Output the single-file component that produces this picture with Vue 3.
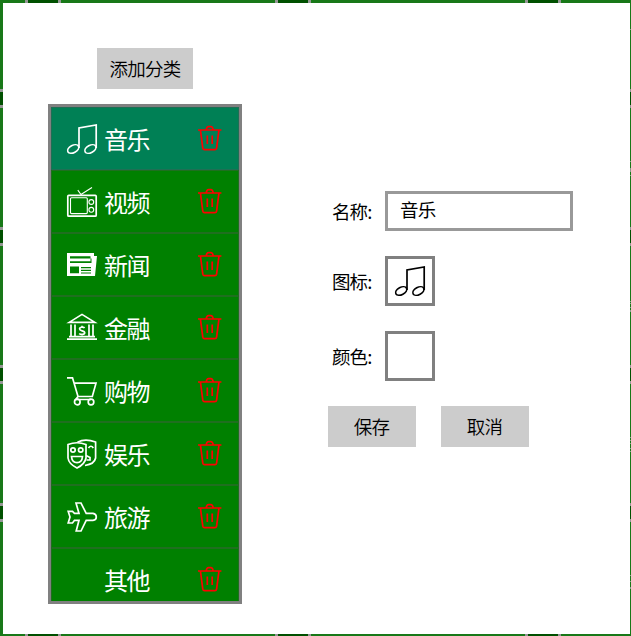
<script setup>
import { ref } from 'vue'

const categories = ref([
  { name: '音乐', icon: 'music' },
  { name: '视频', icon: 'tv' },
  { name: '新闻', icon: 'news' },
  { name: '金融', icon: 'bank' },
  { name: '购物', icon: 'cart' },
  { name: '娱乐', icon: 'masks' },
  { name: '旅游', icon: 'plane' },
  { name: '其他', icon: '' },
])
const selected = ref(0)
const name = ref('音乐')
</script>

<template>
  <div class="backdrop">
    <main class="dialog">
      <section class="side">
        <button class="btn add">添加分类</button>
        <ul class="list">
          <li
            v-for="(c, i) in categories"
            :key="c.name"
            class="item"
            :class="{ active: i === selected }"
            @click="selected = i"
          >
            <svg class="icon" viewBox="0 0 30 30">
              <g v-if="c.icon === 'music'" class="line">
                <path d="M12 24V4L29.2 .9V24" />
                <ellipse cx="6.2" cy="25" rx="6" ry="3.6" transform="rotate(-28 6.2 25)" />
                <ellipse cx="23.4" cy="25" rx="6" ry="3.6" transform="rotate(-28 23.4 25)" />
              </g>
              <g v-else-if="c.icon === 'tv'" class="line">
                <rect x=".8" y="8.3" width="28.4" height="20.9" rx="1" />
                <rect class="thin" x="3.5" y="10.8" width="16.8" height="15.8" rx="1" />
                <circle class="thin" cx="24.3" cy="15" r="2.4" />
                <circle class="thin" cx="24.3" cy="22.8" r="2.4" />
                <path class="thin" d="M10.8 3.2L14 7.5L25 .5" />
              </g>
              <g v-else-if="c.icon === 'news'">
                <path class="solid" d="M0 3H27V6H30L28 26H0Z" />
                <path class="hole" d="M3 6.2H23.5V8.5H3ZM3 11.2H21V13H3ZM3 16.5H12V23.2H3ZM14 17H24V18.3H14ZM14 19.8H24V21H14ZM14 22.4H24V23.5H14ZM23.5 8.5H24.5V13H21V11.2H23.5Z" />
              </g>
              <g v-else-if="c.icon === 'bank'" class="line">
                <path d="M2.2 9.4L15 1.4L27.8 9.4ZM0 26.2H30M2 23.6H28" />
                <path d="M4 11.5V23.8M8 11.5V23.8M22 11.5V23.8M26 11.5V23.8" />
                <path d="M17.6 15C16.5 13.8 12.6 13.8 12.6 16C12.6 18.4 17.7 17.3 17.7 19.8C17.7 22 13.4 21.8 12.2 20.5M15 12.8V14.3M15 21V22.6" />
              </g>
              <g v-else-if="c.icon === 'cart'" class="line">
                <path d="M0 1.8H5.5L11 20.5H25.3L29 7.2H7.2M11 20.5L8.8 23.5H24" />
                <circle cx="10.3" cy="26" r="2.8" />
                <circle cx="24" cy="26" r="2.8" />
              </g>
              <g v-else-if="c.icon === 'masks'" class="line">
                <path d="M1 5.5Q10 2 19 5.5V19Q18 25 10 29Q1.8 25 1 19Z" />
                <path d="M10.5 3.2Q18 -.8 28.6 3V19Q27.5 25 18 26.5M21.5 9Q24 5.5 26.3 9M19 16.5L23 18.5V21H19.5" />
                <circle cx="6" cy="11" r="2.2" />
                <circle cx="13.7" cy="11" r="2.2" />
                <path d="M4.5 17.5H15.5Q15 23.6 10 23.6Q5 23.6 4.5 17.5Z" />
              </g>
              <path
                v-else-if="c.icon === 'plane'"
                class="line"
                d="M9 1H14L19.2 11.4H26Q29.3 12 29.3 15Q29.3 18 26 18.3H19.2L14 29H9.2L12 18.3H7.5L5.5 21H1.2L3 15L1.2 9.4H5.5L7.5 11.4H12Z"
              />
            </svg>
            <span class="name">{{ c.name }}</span>
            <svg class="trash" viewBox="0 0 24 26">
              <path d="M0 5H23.4M8.3 4.5Q8.8 1.7 10.5 1.7H12.9Q14.6 1.7 15.1 4.5M2.5 5.5L4.8 23.2Q5.1 24.7 6.6 24.7H16.8Q18.3 24.7 18.6 23.2L20.9 5.5M9.3 10.5V19M14.2 10.5V19" />
            </svg>
          </li>
        </ul>
      </section>

      <form class="form" @submit.prevent>
        <div class="field">
          <label class="label">名称:</label>
          <input v-model="name" class="input" type="text" />
        </div>
        <div class="field">
          <label class="label">图标:</label>
          <div class="box">
            <svg class="icon" viewBox="0 0 30 30">
              <g class="line">
                <path d="M12 24V4L29.2 .9V24" />
                <ellipse cx="6.2" cy="25" rx="6" ry="3.6" transform="rotate(-28 6.2 25)" />
                <ellipse cx="23.4" cy="25" rx="6" ry="3.6" transform="rotate(-28 23.4 25)" />
              </g>
            </svg>
          </div>
        </div>
        <div class="field">
          <label class="label">颜色:</label>
          <div class="box"></div>
        </div>
        <div class="actions">
          <button class="btn">保存</button>
          <button class="btn">取消</button>
        </div>
      </form>
    </main>
  </div>
</template>

<style>
body {
  margin: 0;
  overflow: hidden;
}
</style>

<style scoped>
.backdrop {
  --columns: repeating-linear-gradient(to right, #187818 0 25px, #969696 25px 28px, #005000 28px 58px, #969696 58px 61px, #187818 61px 250px);
  --rows: repeating-linear-gradient(to bottom, #187818 0 89px, #969696 89px 92px, #005000 92px 105px, #969696 105px 108px, #187818 108px 138px);
  --marks: linear-gradient(to bottom, transparent 29px, #8a9a8a 29px 30px, transparent 30px 161px, #8a9a8a 161px 162px, transparent 162px 168px, #8a9a8a 168px 172px, transparent 172px 175px, #8a9a8a 175px 176px, transparent 176px 301px, #8a9a8a 301px 302px, transparent 302px 303px, #8a9a8a 303px 304px, transparent 304px 307px, #8a9a8a 307px 308px, transparent 308px 310px, #8a9a8a 310px 312px, transparent 312px 437px, #8a9a8a 437px 438px, transparent 438px 440px, #8a9a8a 440px 441px, transparent 441px 443px, #8a9a8a 443px 444px, transparent 444px 448px, #8a9a8a 448px 449px, transparent 449px 451px, #8a9a8a 451px 452px, transparent 452px 575px, #8a9a8a 575px 576px, transparent 576px 581px, #8a9a8a 581px 582px, transparent 582px 587px, #8a9a8a 587px 589px, transparent 589px);
  box-sizing: border-box;
  width: 631px;
  height: 636px;
  padding: 3px 1px 2px 3px;
  font-family: 'Noto Sans CJK SC', sans-serif;
  background:
    var(--columns) 0 0 / 100% 3px no-repeat,
    var(--columns) 0 100% / 100% 2px no-repeat,
    var(--marks) 100% 0 / 1px 100% no-repeat,
    var(--rows) 0 -138px / 100% 1000px no-repeat,
    #187818;
}
.dialog {
  box-sizing: border-box;
  display: flex;
  height: 100%;
  padding-left: 45px;
  background: #fff;
}
.side {
  display: flex;
  flex-direction: column;
  align-items: center;
  gap: 15px;
  width: 194px;
  padding-top: 45px;
}
.btn {
  width: 88px;
  height: 41px;
  padding: 0 1px 1px 0;
  border: 0;
  background: #ccc;
  color: #000;
  font: 350 18.5px 'Noto Sans CJK SC', sans-serif;
  letter-spacing: -0.8px;
}
.add {
  width: 96px;
  padding-right: 0;
}
.list {
  box-sizing: border-box;
  width: 194px;
  height: 500px;
  margin: 0;
  padding: 0;
  overflow: hidden;
  border: 3px solid #808080;
  background: #008000;
  list-style: none;
}
.item {
  box-sizing: border-box;
  display: flex;
  align-items: center;
  height: 63px;
  padding: 0 16px 0 15px;
  border: 1px solid #1f6f1f;
  color: #fff;
}
.item.active {
  background: #008055;
  border-color: #1f6f55;
}
.icon {
  flex: none;
  width: 30px;
  height: 30px;
  overflow: visible;
}
.line {
  fill: none;
  stroke: currentColor;
  stroke-width: 1.7;
}
.thin {
  stroke-width: 1.1;
}
.solid {
  fill: currentColor;
}
.hole {
  fill: #008000;
}
.name {
  flex: 1;
  padding: 1px 0 0 7px;
  font-size: 24px;
  line-height: 36px;
  letter-spacing: -1.4px;
}
.trash {
  width: 24px;
  height: 26px;
  margin-bottom: 1px;
  overflow: visible;
  fill: none;
  stroke: #f00;
  stroke-width: 1.7;
}
.form {
  padding: 188px 0 0 86px;
}
.field {
  display: flex;
  align-items: center;
  height: 50px;
  margin-bottom: 25px;
}
.field:first-child {
  height: 40px;
}
.label {
  box-sizing: border-box;
  width: 57px;
  padding-left: 4px;
  font-size: 18.5px;
  letter-spacing: -0.9px;
  white-space: nowrap;
}
.input {
  box-sizing: border-box;
  width: 188px;
  height: 40px;
  padding: 0 12px 4px;
  border: 3px solid #999;
  outline: 0;
  font: 18.5px 'Noto Sans CJK SC', sans-serif;
  letter-spacing: -0.8px;
}
.box {
  box-sizing: border-box;
  display: grid;
  place-items: center;
  width: 50px;
  height: 50px;
  border: 3px solid #808080;
}
.actions {
  display: flex;
  gap: 25px;
}
</style>
